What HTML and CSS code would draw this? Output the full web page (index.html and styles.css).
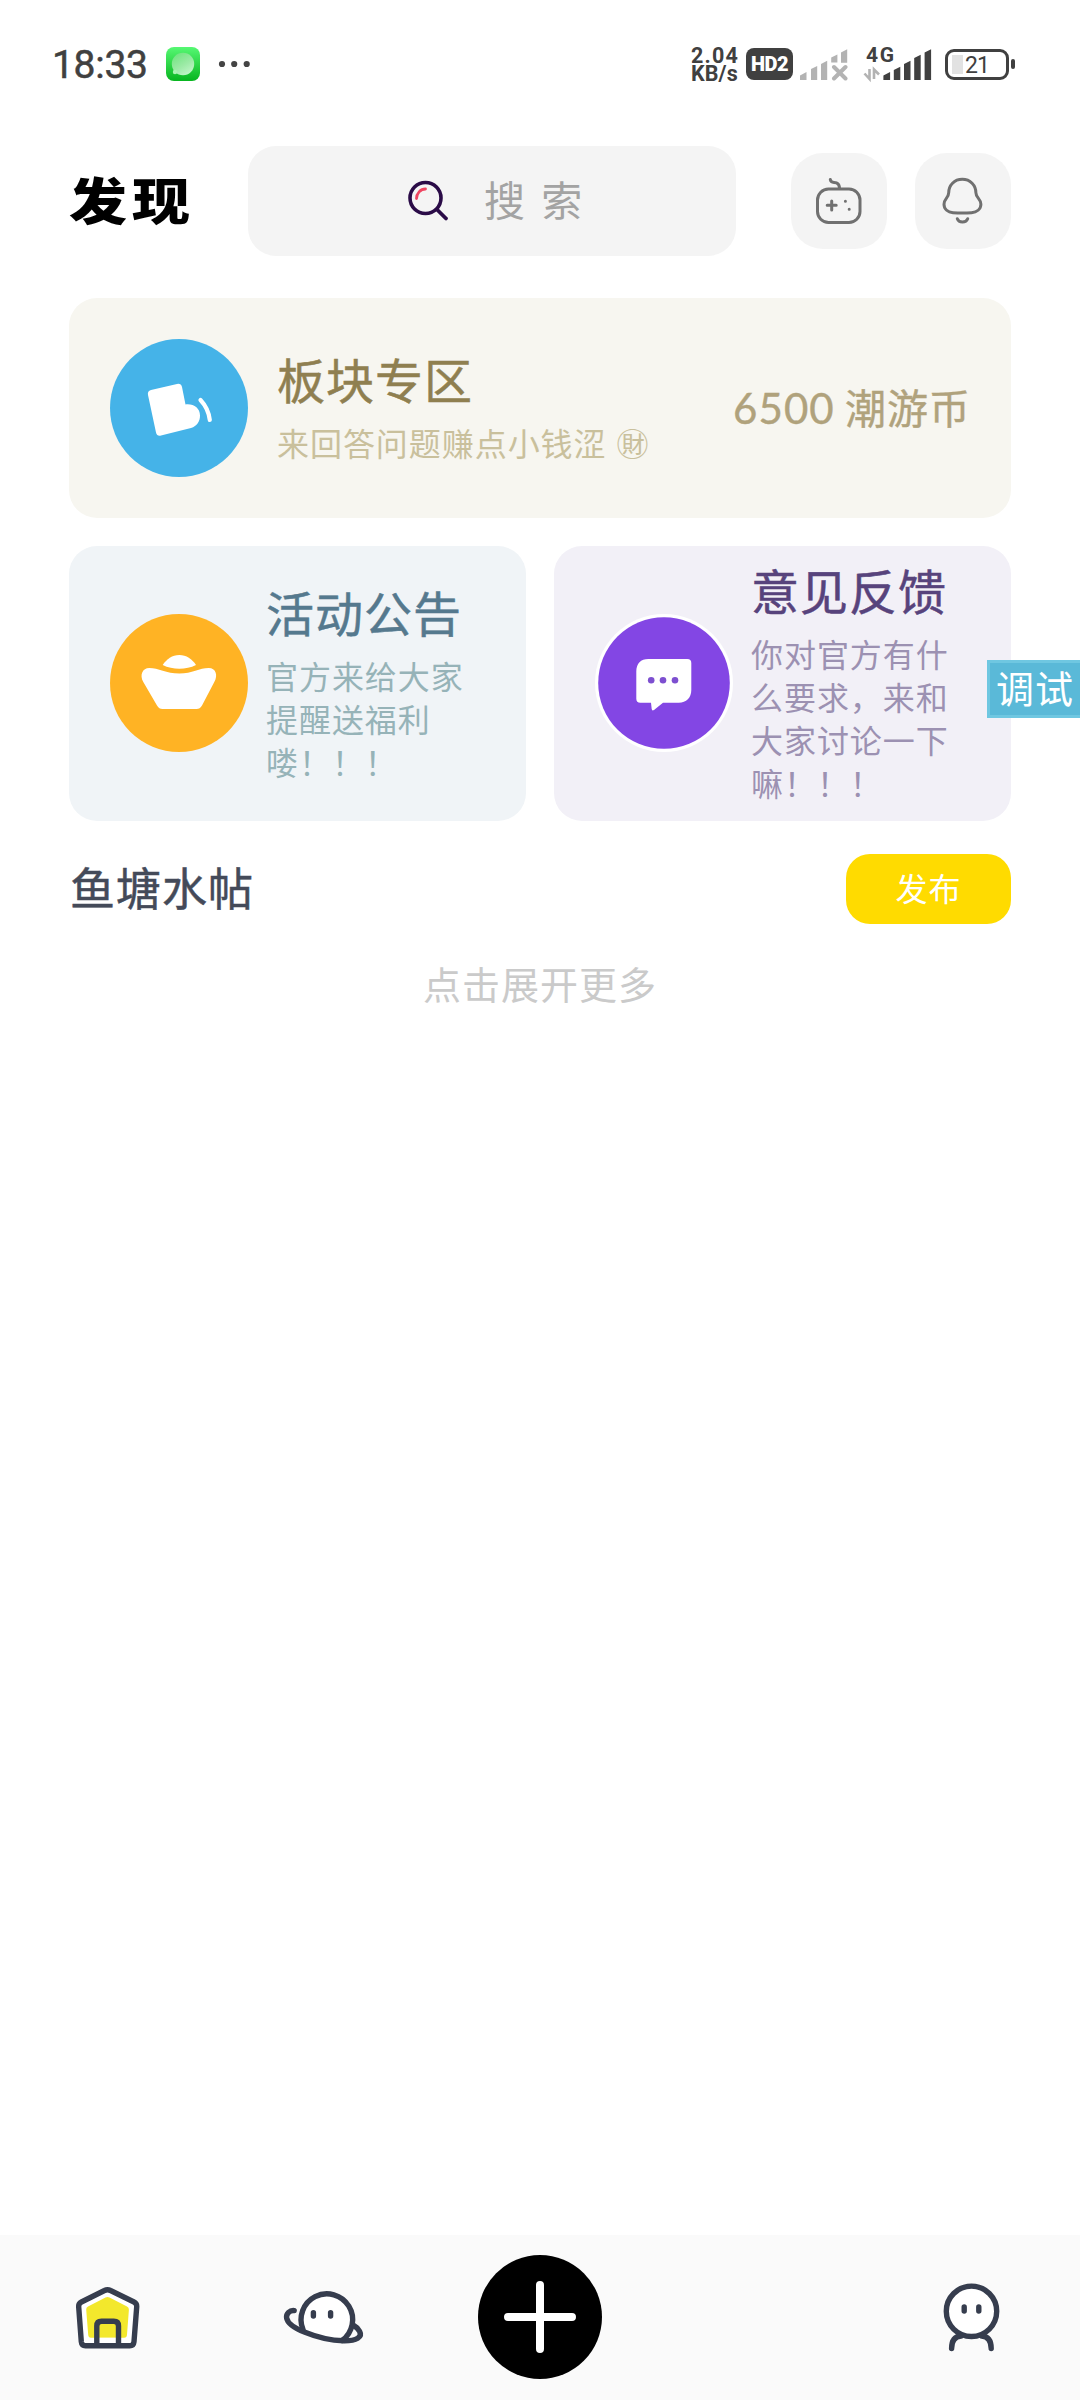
FILE: index.html
```html
<!DOCTYPE html>
<html lang="zh-CN">
<head>
<meta charset="utf-8">
<title>发现</title>
<link rel="stylesheet" href="styles.css">
</head>
<body>
<div class="screen">
  <div class="status">
    <span class="clock">18:33</span>
    <svg class="app-badge" width="34" height="34" viewBox="0 0 34 34">
      <defs>
        <linearGradient id="g1" x1="0" y1="0" x2="0" y2="1"><stop offset="0" stop-color="#56f873"/><stop offset="1" stop-color="#07b51f"/></linearGradient>
        <linearGradient id="g2" x1="0.9" y1="1" x2="0.3" y2="0"><stop offset="0" stop-color="#c9f7cf"/><stop offset="0.5" stop-color="#9ceaa6"/><stop offset="1" stop-color="#74e583"/></linearGradient>
      </defs>
      <rect width="34" height="34" rx="8" fill="url(#g1)"/>
      <circle cx="17" cy="17" r="11.2" fill="url(#g2)"/>
      <circle cx="9" cy="25" r="2.2" fill="#a9f3b2"/>
    </svg>
    <svg class="more" width="32" height="8" viewBox="0 0 32 8" fill="#444"><circle cx="4" cy="4" r="3.1"/><circle cx="16.2" cy="4" r="3.1"/><circle cx="28.7" cy="4" r="3.1"/></svg>
    <div class="status-right">
      <div class="speed"><span>2.04</span><span>KB/s</span></div>
      <span class="hd">HD2</span>
      <svg class="sim1" width="49" height="34" viewBox="801 47 49 34" fill="#b3b3b3">
        <path d="M802 75.5l6.5-3.5v8h-6.5zM813 69l6.2-3v14H813zM823 64l6.2-3.3V80H823zM833.2 57.5l6.2-3v8h-6.2zM843 52.5l6.2-3.3v13.500H843z"/>
        <path d="M836 67l11.500 11.500M847.500 67L836 78.500" stroke="#b3b3b3" stroke-width="4" stroke-linecap="round"/>
      </svg>
      <svg class="sim2" width="69" height="44" viewBox="865 41 69 44" fill="#404040">
        <text class="net" x="868" y="61.500" textLength="28">4G</text>
        <path d="M885.400 75.500l6.700-3.500v8h-6.700zM895.800 70l6.500-3.300V80h-6.500zM906 64l6.500-3.300V80H906zM916.200 58l6.500-3.300V80h-6.500zM926.600 52.500l6.500-3.300V80h-6.500z"/>
        <path d="M871.500 69v10l-5-5.500M876 79V69.500l5 5" fill="none" stroke="#b3b3b3" stroke-width="2.600"/>
      </svg>
      <span class="battery">21</span><span class="nub"></span>
    </div>
  </div>

  <header class="header">
    <h1 class="page-title">发现</h1>
    <div class="search">
      <svg width="42" height="42" viewBox="0 0 42 42" fill="none" stroke-linecap="round">
        <circle cx="18.500" cy="18" r="15.500" stroke="#2a0b47" stroke-width="3.600"/>
        <path d="M30 29.500l9 9" stroke="#2a0b47" stroke-width="3.800"/>
        <path d="M9.500 18.500c0-5 4-9.500 9-9.500" stroke="#ef4561" stroke-width="2.800"/>
      </svg>
      <span>搜 索</span>
    </div>
    <div class="icon-btn">
      <svg width="96" height="96" viewBox="0 0 96 96" fill="none" stroke="#707070" stroke-width="3" stroke-linecap="round">
        <rect x="26.500" y="36" width="42.500" height="33.500" rx="11"/>
        <path d="M39.300 26.500c.6 4 3.700 2.300 6.200 3.300 2.300.9 3 2.500 3 5.500M40.700 48v9M36.200 52.300h9"/>
        <path d="M54.400 48.300h.01M58.200 56.300h.01"/>
      </svg>
    </div>
    <div class="icon-btn">
      <svg width="96" height="96" viewBox="0 0 96 96" fill="none" stroke="#707070" stroke-width="3" stroke-linecap="round" stroke-linejoin="round">
        <path d="M47.300 26.300c-8 0-13.600 6-13.600 13.500 0 5-4.700 5.700-4.700 11.500 0 5 4 8 9 8.400 6 .5 12.600.5 18.600 0 5-.4 9.300-3.400 9.300-8.400 0-5.800-5-6.500-5-11.500 0-7.500-5.600-13.500-13.600-13.500z"/>
        <path d="M42.300 65.700c1.500 4.300 8.800 4.300 10.400 0"/>
      </svg>
    </div>
  </header>

  <main class="content">
    <section class="card card-board">
      <svg class="avatar" width="138" height="138" viewBox="0 0 138 138">
        <circle cx="69" cy="69" r="69" fill="#45b3e8"/>
        <path d="M41 51l26-6q4-.8 5 3l3.500 17.500c8-1 14.500 3.500 14.500 11 0 6-3 10.500-9 12.500L51 96.500q-4 1-5-3L38 56q-.8-4 3-5z" fill="#fff"/>
        <path d="M90.500 61q8 8.500 9.300 20" fill="none" stroke="#fff" stroke-width="4.200" stroke-linecap="round"/>
      </svg>
      <div class="text">
        <h2>板块专区</h2>
        <p>来回答问题赚点小钱涩 ㊖</p>
      </div>
      <span class="amount"><b>6500</b> 潮游币</span>
    </section>

    <div class="pair">
      <section class="card card-news">
        <svg class="avatar" width="138" height="138" viewBox="0 0 138 138">
          <circle cx="69" cy="69" r="69" fill="#ffb324"/>
          <path d="M52.700 51c4-6 9.500-10 16.600-10S82 45 86 51c-10 5-23.300 5-33.300 0z" fill="#fff"/>
          <path d="M33.300 68c-4-7-.8-14 6-14 9 0 17 5.500 30 5.500s20-5.500 29.500-5.500c6.800 0 9.500 7 5.500 14L92 91.500Q90 95 86.500 95h-34q-3.500 0-5.500-3.500z" fill="#fff"/>
        </svg>
        <div class="text">
          <h2>活动公告</h2>
          <p>官方来给大家提醒送福利喽！！！</p>
        </div>
      </section>
      <section class="card card-feedback">
        <svg class="avatar" width="138" height="138" viewBox="0 0 138 138">
          <circle cx="69" cy="69" r="69" fill="#fff"/>
          <circle cx="69" cy="69" r="65.800" fill="#8346e4"/>
          <path d="M53.300 45h39q4 0 4 4v27c0 8-5 12.700-12.500 12.700H68l-9 7.300q-2 1.300-2.300-1l-.7-6.300H45.300q-4 0-4-4V57.500c0-8 4.500-12.500 12-12.500z" fill="#fff"/>
          <g fill="#7d4fd0"><circle cx="56.200" cy="66.300" r="3.300"/><circle cx="68" cy="66.300" r="3.300"/><circle cx="80" cy="66.300" r="3.300"/></g>
        </svg>
        <div class="text">
          <h2>意见反馈</h2>
          <p>你对官方有什么要求，来和大家讨论一下嘛！！！</p>
        </div>
      </section>
    </div>

    <div class="section-head">
      <h3>鱼塘水帖</h3>
      <button class="publish">发布</button>
    </div>
    <p class="load-more">点击展开更多</p>
  </main>

  <div class="debug">调试</div>

  <nav class="tabs">
    <svg class="tab-home" width="76" height="165" viewBox="70 0 76 165" fill="none" stroke="#363d4e" stroke-width="5.400" stroke-linejoin="round">
      <path d="M104.500 55.500q3-1.600 6 0l23.500 11.500q3 1.500 2.700 5l-2.700 34.700q-.4 4-4.200 4H85.500q-3.800 0-4.200-4L78.700 72q-.3-3.500 2.700-5z" fill="#fff"/>
      <path d="M105.500 62.500q2-1 4 0l17.500 9q2 1 1.900 3.200l-1.900 25q-.2 3-2.800 3H91q-2.600 0-2.800-3l-2-25q-.2-2.200 1.800-3.200z" fill="#f3e82c" stroke="none"/>
      <path d="M99.500 102.800h16.300v5.200H99.500z" fill="#fff" stroke="none"/>
      <path d="M96.800 109V91q0-4.700 4.700-4.700h12.300q4.700 0 4.700 4.700v18"/>
    </svg>
    <svg class="tab-planet" width="90" height="165" viewBox="280 0 90 165" fill="none" stroke="#363d4e" stroke-width="5.400" stroke-linecap="round">
      <path d="M302.500 95.500C293 70 305 59.200 325.400 59.200c16 0 26.300 12 26.300 26.500 0 9-4.500 15.300-9.700 19.800-14 0-27-3.500-39.500-10z" fill="#fff" stroke="none"/>
      <path d="M303 94.500A25.800 25.800 0 1 1 342 105.500"/>
      <path d="M294.200 75.600c-4.500-.5-8.200 3-7.600 7.200.8 5.700 9.700 11 18.400 14.500 8.500 3.500 23 8.200 38.500 8.500 13.500.2 19-4 16.200-9.300-1.100-2.200-3.200-4.500-6-6"/>
      <path d="M313.400 77.600v3.400M330.600 77.600v3.400"/>
    </svg>
    <svg class="tab-add" width="124" height="124" viewBox="0 0 124 124">
      <circle cx="62" cy="62" r="62"/>
      <path d="M62 30v64M30 62h64" stroke="#fff" stroke-width="8" stroke-linecap="round"/>
    </svg>
    <svg class="tab-me" width="66" height="165" viewBox="938 0 66 165" fill="none" stroke="#363d4e" stroke-width="5.400" stroke-linecap="round">
      <circle cx="971.500" cy="76.300" r="25.200" fill="#fff"/>
      <path d="M964.200 72v4M978.800 72v4"/>
      <path d="M951.600 113.500c0-6.500 2.500-12 9.500-12.500M991.200 113.500c0-6.500-2.500-12-9.500-12.500"/>
    </svg>
  </nav>
</div>
</body>
</html>
```
FILE: styles.css
```css
* { box-sizing: border-box; margin: 0; padding: 0; }
body { background: #fff; font-family: "Noto Sans CJK SC", sans-serif; }
h1, h2, h3, b { font-weight: 400; }
svg { display: block; flex: none; }

.screen {
  position: relative;
  display: flex;
  flex-direction: column;
  width: 1080px;
  height: 2400px;
  overflow: hidden;
}

/* status bar */
.status {
  display: flex;
  align-items: center;
  height: 128px;
  padding: 0 65px 0 52px;
  font-family: Roboto, sans-serif;
  color: #404040;
}
.clock { width: 114px; font-size: 39px; line-height: 48px; letter-spacing: -0.3px; -webkit-text-stroke: 0.5px #404040; padding-top: 2px; }
.more { margin-left: 18px; }
.status-right { display: flex; align-items: center; margin-left: auto; }
.speed { display: flex; flex-direction: column; width: 55px; font-size: 21.5px; font-weight: 700; line-height: 18px; padding-top: 2px; letter-spacing: 1.2px; }
.speed span + span { letter-spacing: 0.1px; }
.hd {
  width: 47px;
  height: 32px;
  border-radius: 8px;
  background: #404040;
  color: #fff;
  font-size: 20px;
  font-weight: 900;
  line-height: 32px;
  text-align: center;
  letter-spacing: -0.5px;
}
.sim1 { margin-left: 6px; }
.sim2 { margin: -2px 0 0 15px; }
.net { font: 700 21px Roboto, sans-serif; }
.battery {
  width: 64px;
  height: 31px;
  margin-left: 13px;
  border: 3px solid #404040;
  border-radius: 9px;
  background: linear-gradient(#e2e2e2, #e2e2e2) 4px 3px / 11px 19px no-repeat;
  font-size: 23px;
  line-height: 27px;
  text-align: center;
  letter-spacing: -1px;
}
.nub { width: 4px; height: 10px; margin-left: 2px; border-radius: 2px; background: #404040; }

/* title and search */
.header { display: flex; align-items: center; height: 146px; padding: 0 69px; }
.page-title {
  width: 179px;
  font-size: 58px;
  font-weight: 900;
  line-height: 60px;
  letter-spacing: 5px;
  white-space: nowrap;
  color: #000;
  margin-top: -6px;
  transform: scaleY(0.87);
}
.search {
  display: flex;
  align-items: center;
  width: 488px;
  height: 110px;
  margin-right: 55px;
  padding-left: 159px;
  border-radius: 28px;
  background: #f4f4f4;
  color: #a3a3a3;
  font-size: 41px;
  line-height: 56px;
  word-spacing: 7px;
}
.search span { margin: -6px 0 0 35px; }
.icon-btn { width: 96px; height: 96px; border-radius: 32px; background: #f4f4f4; }
.icon-btn + .icon-btn { margin-left: 28px; }

/* cards */
.content { flex: 1; padding: 24px 69px 0; }
.card { display: flex; align-items: center; border-radius: 28px; padding-left: 41px; }
.card h2 { font-size: 48px; line-height: 53px; letter-spacing: 1px; margin-bottom: 16px; -webkit-text-stroke: 0.5px currentColor; }
.card p { font-size: 32px; line-height: 43px; letter-spacing: 0.95px; }
.card .text { margin-left: 18px; width: 206px; }

.card-board { height: 220px; padding-right: 40px; background: #f7f6f0; }
.card-board .text { flex: 1; width: auto; margin-left: 29px; white-space: nowrap; }
.card-board h2 { color: #8f7f50; }
.card-board p { color: #c9c09c; word-spacing: 2px; }
.amount { margin-top: -2px; font-size: 41px; line-height: 56px; letter-spacing: 1px; color: #b0a27c; white-space: nowrap; -webkit-text-stroke: 0.4px currentColor; }
.amount b { font-family: Lato, sans-serif; font-size: 42px; letter-spacing: 1.1px; }

.pair { display: grid; grid-template-columns: 457px 457px; gap: 28px; height: 275px; margin-top: 28px; }
.pair .avatar { margin-top: -1px; }
.card-news { background: #f0f4f7; }
.card-news h2 { color: #55798e; }
.card-news p { color: #96b3b8; }
.card-feedback { background: #f2f0f7; }
.card-feedback h2 { color: #57437c; }
.card-feedback p { color: #9c91b2; }

.section-head { display: flex; align-items: center; justify-content: space-between; height: 70px; margin-top: 33px; }
.section-head h3 { font-size: 45px; line-height: 60px; letter-spacing: 1px; padding-left: 1px; margin-top: -4px; color: #444a59; -webkit-text-stroke: 0.5px currentColor; }
.publish {
  width: 165px;
  height: 70px;
  border: 0;
  border-radius: 24px;
  background: #ffdb00;
  color: #fff;
  font: 400 32px/60px "Noto Sans CJK SC", sans-serif;
  letter-spacing: 1px;
  padding-bottom: 4px;
}
.load-more { margin-top: 31px; font-size: 38px; line-height: 56px; letter-spacing: 1px; text-align: center; color: #cacaca; }

/* floating tag pinned to the right edge */
.debug {
  position: absolute;
  top: 660px;
  right: 0;
  width: 93px;
  height: 58px;
  padding-left: 6px;
  border: 3px solid #6fc7e1;
  border-right: 0;
  background: #5ab9d8;
  color: #fff;
  font-size: 38px;
  line-height: 47px;
  letter-spacing: 1px;
  white-space: nowrap;
}

/* bottom tabs */
.tabs { display: flex; align-items: center; height: 165px; padding: 0 76px 0 70px; background: #fafafa; }
.tab-planet { margin-left: 134px; }
.tab-add { margin: -1px 0 0 108px; }
.tab-me { margin-left: auto; }
```
